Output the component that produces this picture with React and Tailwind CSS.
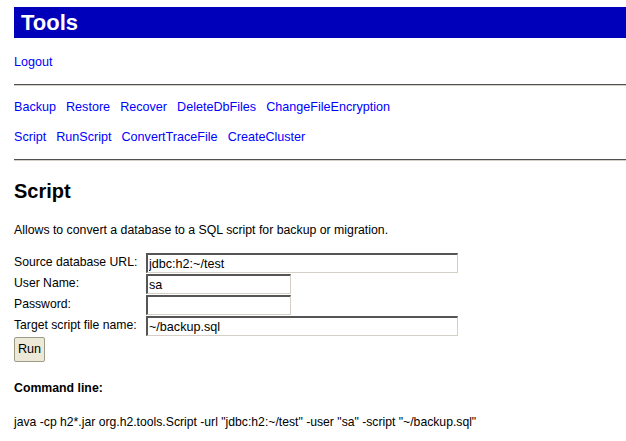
import React from "react";

const toolsRow1 = ["Backup", "Restore", "Recover", "DeleteDbFiles", "ChangeFileEncryption"];
const toolsRow2 = ["Script", "RunScript", "ConvertTraceFile", "CreateCluster"];

const fields = [
  { label: "Source database URL:", value: "jdbc:h2:~/test", wide: true },
  { label: "User Name:", value: "sa", wide: false },
  { label: "Password:", value: "", wide: false },
  { label: "Target script file name:", value: "~/backup.sql", wide: true },
];

const Rule = ({ className }) => (
  <div className={`h-[2px] w-full border-t border-t-[#505050] border-b border-b-[#d4d0c8] ${className}`} />
);

const LinkRow = ({ items, className }) => (
  <div className={`flex gap-[10px] h-[15px] leading-[15px] ${className}`}>
    {items.map((name) => (
      <a key={name} href="#" className="text-[#0000ff]">
        {name}
      </a>
    ))}
  </div>
);

const App = () => {
  return (
    <div
      className="min-h-[441px] bg-white pl-[14px] pt-[7px] text-[12.6px] text-black"
      style={{ fontFamily: '"Liberation Sans", Arial, sans-serif' }}
    >
      <div className="h-[31px] bg-[#0000bb] pl-[7px] text-[22px] font-bold leading-[31px] text-white">
        Tools
      </div>

      <div className="mt-[17px] h-[15px] leading-[15px]">
        <a href="#" className="text-[#0000ff]">Logout</a>
      </div>

      <Rule className="mt-[14px]" />

      <LinkRow items={toolsRow1} className="mt-[14px]" />
      <LinkRow items={toolsRow2} className="mt-[15px]" />

      <Rule className="mt-[14px]" />

      <h2 className="mt-[19px] h-[23px] text-[20px] font-bold leading-[23px]">Script</h2>

      <p className="mt-[20px] h-[15px] text-[12.3px] leading-[15px]">
        Allows to convert a database to a SQL script for backup or migration.
      </p>

      <div className="mt-[15px] grid grid-cols-[132px_auto] gap-y-[1px] text-[12.2px]">
        {fields.map((f) => (
          <React.Fragment key={f.label}>
            <div className="h-[20px] leading-[19px]">{f.label}</div>
            <div className="h-[20px]">
              <input
                readOnly
                value={f.value}
                className={`${f.wide ? "w-[312px]" : "w-[145px]"} h-[20px] border-t-2 border-l-2 border-t-[#555] border-l-[#555] border-r border-b border-r-[#d4d0c8] border-b-[#d4d0c8] bg-white pl-[1px] text-[12.6px] leading-[16px] text-black outline-none`}
                style={{ fontFamily: '"Liberation Sans", Arial, sans-serif' }}
              />
            </div>
          </React.Fragment>
        ))}
      </div>

      <button
        className="mt-[1px] block h-[25px] w-[31px] rounded-[2px] border border-[#9d9a86] bg-[#ece9d8] text-[12.6px] leading-[23px] text-black"
        style={{ fontFamily: '"Liberation Sans", Arial, sans-serif' }}
      >
        Run
      </button>

      <div className="mt-[19px] h-[14px] text-[12.3px] font-bold leading-[14px]">Command line:</div>

      <div className="mt-[20px] h-[15px] text-[12.2px] leading-[15px]">
        java -cp h2*.jar org.h2.tools.Script -url "jdbc:h2:~/test" -user "sa" -script "~/backup.sql"
      </div>
    </div>
  );
};

export default App;
